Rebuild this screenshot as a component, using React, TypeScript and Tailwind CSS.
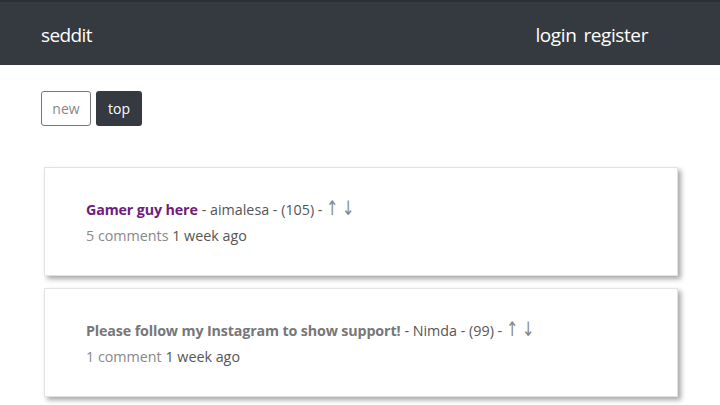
import React from "react";

const font = { fontFamily: '"Open Sans", "Noto Sans", sans-serif' };
const arrowFont = { fontFamily: '"DejaVu Sans", sans-serif' };

function Post({
  title,
  titleClass,
  author,
  score,
  comments,
}: {
  title: string;
  titleClass: string;
  author: string;
  score: number;
  comments: string;
}) {
  return (
    <div className="h-[109px] w-[634px] border border-[#e2e2e2] bg-white pl-[41px] pt-[29px] shadow-[3px_3px_5px_rgba(0,0,0,0.35)]">
      <div className="flex items-baseline text-[14.3px] leading-[26px] text-[#555]">
        <span className={`font-bold tracking-[-0.15px] ${titleClass}`}>{title}</span>
        <span className="ml-[4px]">
          - {author} - ({score}) -
        </span>
        <span
          className="ml-[2px] scale-x-[0.75] text-[20px] leading-none text-[#888]"
          style={arrowFont}
        >
          ↑
        </span>
        <span
          className="-ml-[1px] scale-x-[0.75] text-[20px] leading-none text-[#888]"
          style={arrowFont}
        >
          ↓
        </span>
      </div>
      <div className="text-[14.3px] leading-[26px]">
        <span className="text-[#888]">{comments}</span>{" "}
        <span className="text-[#555]">1 week ago</span>
      </div>
    </div>
  );
}

export default function App() {
  return (
    <div className="min-h-[405px] bg-white" style={font}>
      <header className="flex h-[65px] items-center justify-between border-t-2 border-[#2b3035] bg-[#343a40] pl-[41px] pr-[72px] pt-[3px] text-white">
        <span className="text-[19px] tracking-[-0.6px]">seddit</span>
        <div className="flex gap-[7px] text-[19px] tracking-[-0.4px]">
          <span>login</span>
          <span>register</span>
        </div>
      </header>
      <div className="flex gap-[5px] pl-[41px] pt-[26px]">
        <button className="h-[35px] w-[50px] rounded-[3px] border border-[#777] bg-white text-[14px] text-[#888]">
          new
        </button>
        <button className="h-[35px] w-[46px] rounded-[3px] bg-[#343a40] text-[14px] text-white">
          top
        </button>
      </div>
      <div className="flex flex-col gap-[12px] pl-[44px] pt-[41px]">
        <Post
          title="Gamer guy here"
          titleClass="text-[#6f1d7d]"
          author="aimalesa"
          score={105}
          comments="5 comments"
        />
        <Post
          title="Please follow my Instagram to show support!"
          titleClass="text-[#777]"
          author="Nimda"
          score={99}
          comments="1 comment"
        />
      </div>
    </div>
  );
}
